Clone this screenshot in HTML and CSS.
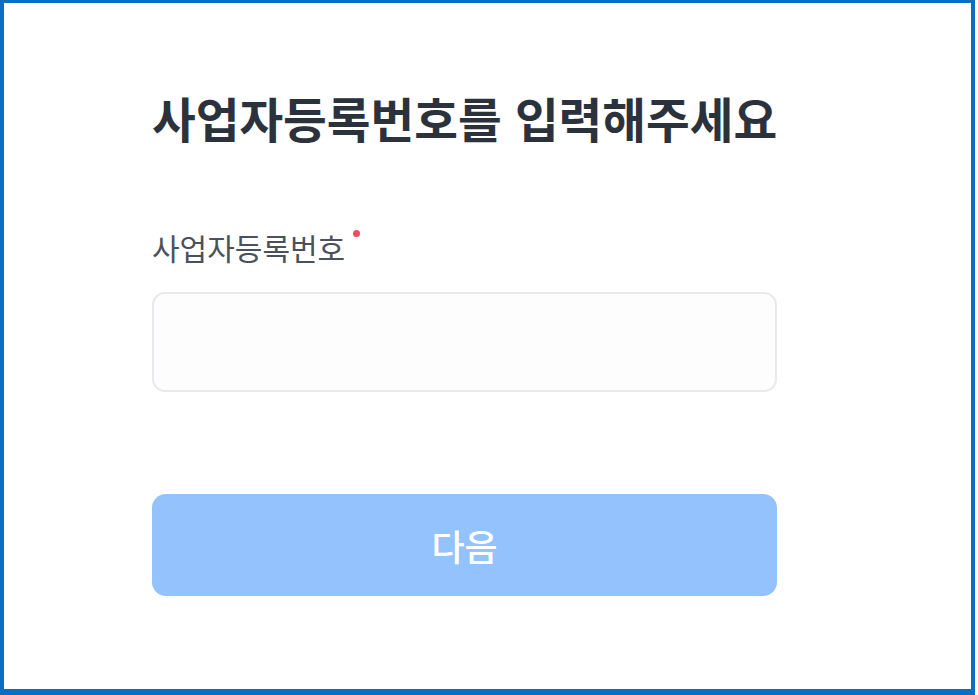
FILE: index.html
```html
<!DOCTYPE html>
<html lang="ko">
<head>
  <meta charset="UTF-8" />
  <meta name="viewport" content="width=device-width, initial-scale=1.0" />
  <title>사업자등록번호 입력</title>
  <link rel="stylesheet" href="styles.css">
</head>
<body>
  <div class="frame">
    <div class="form">
      <h1 class="title">사업자등록번호를 입력해주세요</h1>

      <label class="field-label" for="bizNo">사업자등록번호<span class="required"></span></label>
      <input id="bizNo" class="field-input" type="text" />

      <button class="next-btn" disabled>다음</button>
    </div>
  </div>
</body>
</html>
```

FILE: styles.css
```css
body { margin: 0; font-family: "Noto Sans CJK KR", "Noto Sans", sans-serif; background: #fff; }
.frame { box-sizing: border-box; width: 975px; height: 695px; border: solid #0a6fc2; border-width: 3px 4px 6px 4px; }
.form { width: 625px; padding: 85px 0 0 148px; display: flex; flex-direction: column; }
.title { margin: 0; font-size: 47.5px; font-weight: 700; color: #2b323c; line-height: 60px; white-space: nowrap; }
.field-label { margin-top: 79px; font-size: 30px; color: #4b515a; line-height: 40px; }
.required { display: inline-block; width: 7px; height: 7px; border-radius: 50%; background: #ef4d5b; vertical-align: top; margin: 3px 0 0 8px; }
.field-input { margin-top: 25px; height: 100px; box-sizing: border-box; border: 2px solid #e8e9ec; border-radius: 13px; background: #fdfdfd; font-size: 24px; padding: 0 20px; }
.next-btn { margin-top: 102px; height: 102px; border: none; border-radius: 14px; background: #93c2fd; color: #fff; font-family: inherit; font-size: 36px; font-weight: 500; }
```
